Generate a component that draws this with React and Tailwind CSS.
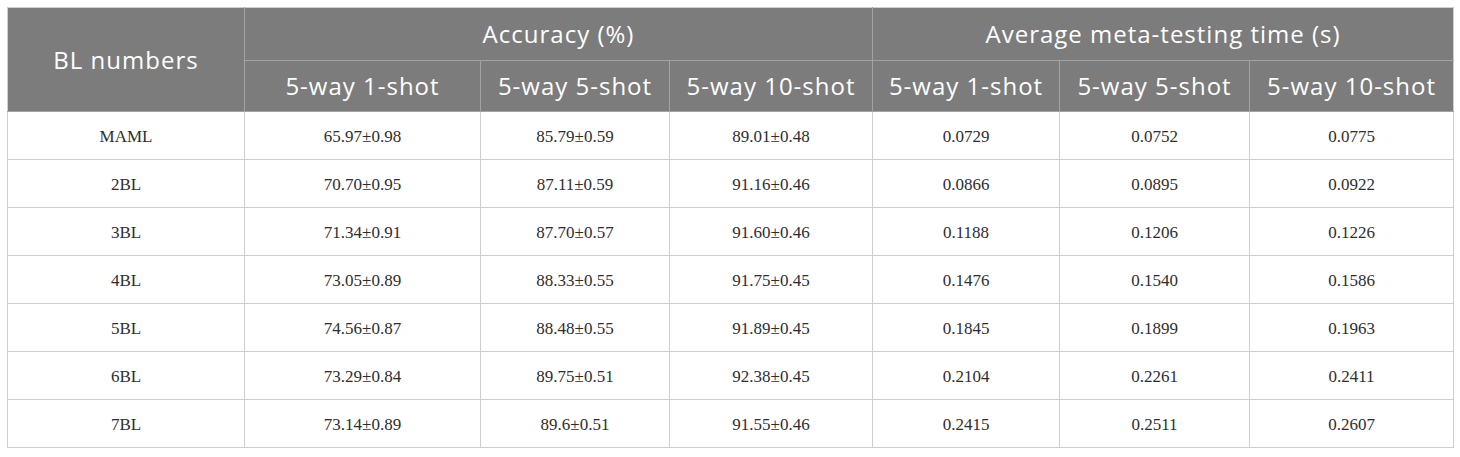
export default function App() {
  const rows = [
    ["MAML", "65.97±0.98", "85.79±0.59", "89.01±0.48", "0.0729", "0.0752", "0.0775"],
    ["2BL", "70.70±0.95", "87.11±0.59", "91.16±0.46", "0.0866", "0.0895", "0.0922"],
    ["3BL", "71.34±0.91", "87.70±0.57", "91.60±0.46", "0.1188", "0.1206", "0.1226"],
    ["4BL", "73.05±0.89", "88.33±0.55", "91.75±0.45", "0.1476", "0.1540", "0.1586"],
    ["5BL", "74.56±0.87", "88.48±0.55", "91.89±0.45", "0.1845", "0.1899", "0.1963"],
    ["6BL", "73.29±0.84", "89.75±0.51", "92.38±0.45", "0.2104", "0.2261", "0.2411"],
    ["7BL", "73.14±0.89", "89.6±0.51", "91.55±0.46", "0.2415", "0.2511", "0.2607"],
  ];
  const sub = ["5-way 1-shot", "5-way 5-shot", "5-way 10-shot", "5-way 1-shot", "5-way 5-shot", "5-way 10-shot"];
  const th = "border border-[#a3a3a3] bg-[#7b7c7b] text-white font-normal text-center align-middle text-[24px] tracking-[1px] p-0";
  return (
    <div className="w-[1460px] h-[457px] bg-white pt-[7px] pl-[7px]">
      <table
        className="border-collapse table-fixed w-[1446px] border border-[#cfcfcf]"
        style={{ fontFamily: '"Open Sans", "Noto Sans", sans-serif' }}
      >
        <colgroup>
          <col className="w-[237px]" />
          <col className="w-[236px]" />
          <col className="w-[189px]" />
          <col className="w-[203px]" />
          <col className="w-[187px]" />
          <col className="w-[190px]" />
          <col className="w-[204px]" />
        </colgroup>
        <thead>
          <tr className="h-[53px]">
            <th rowSpan={2} className={`${th} border-l-[#cfcfcf] border-t-[#cfcfcf]`}>BL numbers</th>
            <th colSpan={3} className={`${th} border-t-[#cfcfcf]`}>Accuracy (%)</th>
            <th colSpan={3} className={`${th} border-t-[#cfcfcf] border-r-[#cfcfcf]`}>Average meta-testing time (s)</th>
          </tr>
          <tr className="h-[51px]">
            {sub.map((s, i) => (
              <th key={i} className={`${th} ${i === 5 ? "border-r-[#cfcfcf]" : ""}`}>{s}</th>
            ))}
          </tr>
        </thead>
        <tbody style={{ fontFamily: '"Liberation Serif", "Times New Roman", serif' }}>
          {rows.map((r, ri) => (
            <tr key={ri} className="h-[48px]">
              {r.map((c, ci) => (
                <td key={ci} className="border border-[#cfcfcf] text-center align-middle text-[17px] text-[#2e2e2e] pt-[3px] pb-0">
                  {c}
                </td>
              ))}
            </tr>
          ))}
        </tbody>
      </table>
    </div>
  );
}
